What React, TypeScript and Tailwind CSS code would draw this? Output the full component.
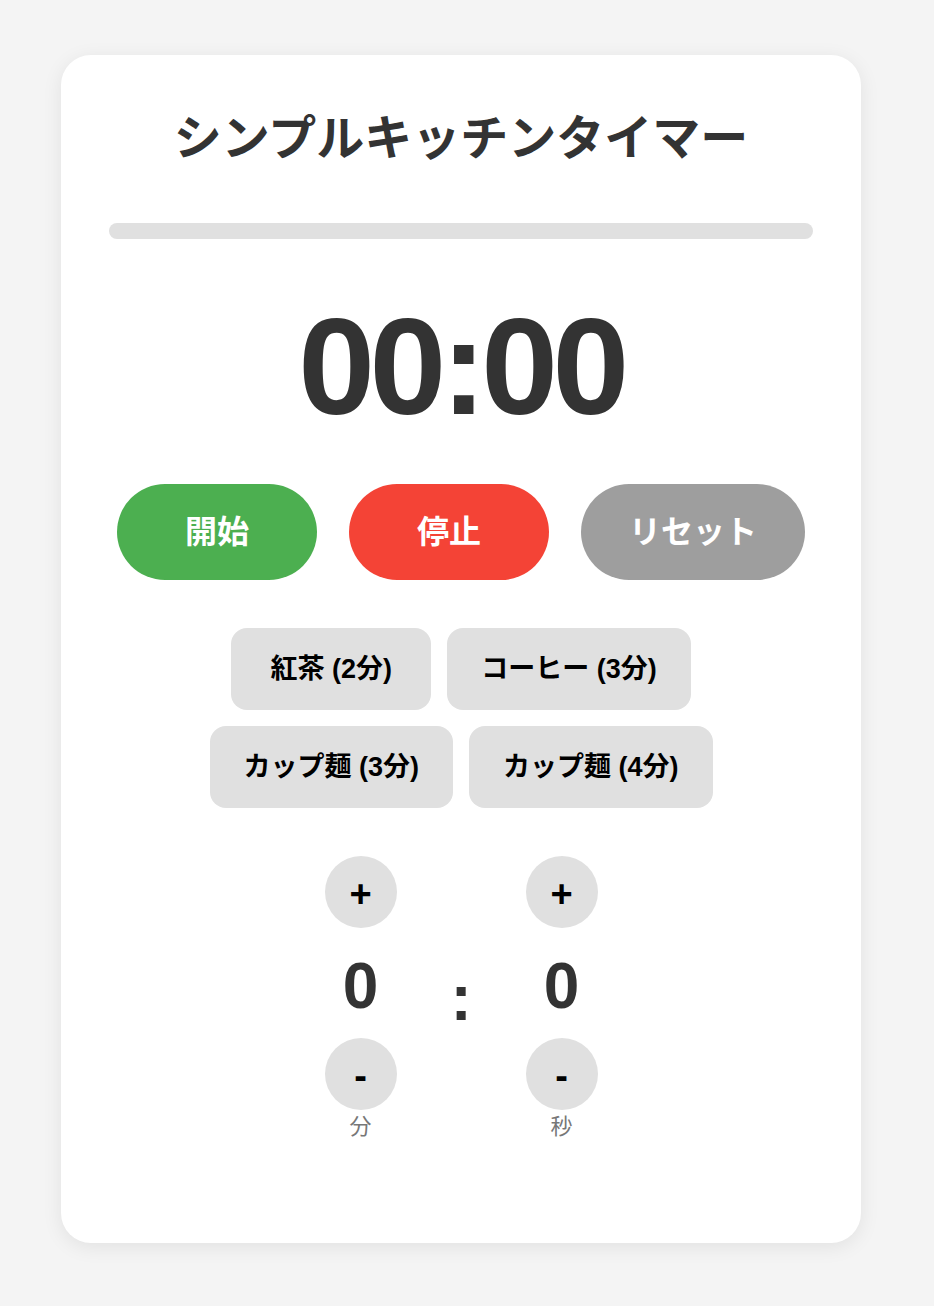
import { useEffect, useState } from "react";

const presets = [
  { label: "紅茶 (2分)", seconds: 120 },
  { label: "コーヒー (3分)", seconds: 180 },
  { label: "カップ麺 (3分)", seconds: 180 },
  { label: "カップ麺 (4分)", seconds: 240 },
];

const pad = (n: number) => String(n).padStart(2, "0");

function Adjuster({
  value,
  label,
  onUp,
  onDown,
}: {
  value: number;
  label: string;
  onUp: () => void;
  onDown: () => void;
}) {
  const btn =
    "flex h-[72px] w-[72px] items-center justify-center rounded-full bg-[#e0e0e0] pt-1 text-[38px] font-bold leading-none text-black";
  return (
    <div className="flex w-[100px] flex-col items-center">
      <button type="button" className={btn} onClick={onUp}>
        +
      </button>
      <div className="mt-[21px] mb-[15px] text-[64px] font-bold leading-[74px] text-[#333]">{value}</div>
      <button type="button" className={btn} onClick={onDown}>
        -
      </button>
      <div className="mt-[4px] text-[22px] leading-[26px] text-[#777]">{label}</div>
    </div>
  );
}

export default function App() {
  const [min, setMin] = useState(0);
  const [sec, setSec] = useState(0);
  const [total, setTotal] = useState(0);
  const [left, setLeft] = useState(0);
  const [running, setRunning] = useState(false);

  useEffect(() => {
    if (!running) return;
    const id = setInterval(() => {
      setLeft((l) => {
        if (l <= 1) {
          setRunning(false);
          return 0;
        }
        return l - 1;
      });
    }, 1000);
    return () => clearInterval(id);
  }, [running]);

  const setTime = (s: number) => {
    setRunning(false);
    setMin(Math.floor(s / 60));
    setSec(s % 60);
    setTotal(s);
    setLeft(s);
  };

  const start = () => {
    if (left > 0) setRunning(true);
  };

  const pct = total > 0 ? ((total - left) / total) * 100 : 0;
  const mainBtn =
    "min-w-[200px] rounded-full px-12 py-6 text-[32px] font-bold leading-[48px] text-white";

  return (
    <div
      className="flex min-h-screen items-start justify-center bg-[#f4f4f4] pr-3 pt-[55px] pb-[55px]"
      style={{ fontFamily: '"Liberation Sans", "Noto Sans CJK JP", sans-serif' }}
    >
      <div className="flex w-[800px] flex-col items-center rounded-[30px] bg-white px-12 pb-[103px] pt-12 shadow-[0_4px_20px_rgba(0,0,0,0.08)]">
        <h1 className="text-[48px] font-bold leading-[72px] text-[#333]">シンプルキッチンタイマー</h1>

        <div className="mt-12 h-4 w-full overflow-hidden rounded-full bg-[#e0e0e0]">
          <div className="h-full bg-[#4caf50]" style={{ width: `${pct}%` }} />
        </div>

        <div className="mt-[58px] mb-[49px] text-[138px] font-bold leading-none tracking-[-0.04em] text-[#333]">
          {pad(Math.floor(left / 60))}:{pad(left % 60)}
        </div>

        <div className="flex justify-center gap-8">
          <button type="button" className={`${mainBtn} bg-[#4caf50]`} onClick={start}>
            開始
          </button>
          <button type="button" className={`${mainBtn} bg-[#f44336]`} onClick={() => setRunning(false)}>
            停止
          </button>
          <button type="button" className={`${mainBtn} bg-[#9e9e9e]`} onClick={() => setTime(0)}>
            リセット
          </button>
        </div>

        <div className="mt-12 flex max-w-[560px] flex-wrap justify-center gap-4">
          {presets.map((p) => (
            <button
              key={p.label}
              type="button"
              className="min-w-[200px] rounded-2xl bg-[#e0e0e0] px-[34px] py-6 text-[27px] font-bold leading-[34px] text-black"
              onClick={() => setTime(p.seconds)}
            >
              {p.label}
            </button>
          ))}
        </div>

        <div className="mt-12 flex items-center justify-center gap-10">
          <Adjuster
            value={min}
            label="分"
            onUp={() => setTime((min + 1) * 60 + sec)}
            onDown={() => setTime(Math.max(0, min - 1) * 60 + sec)}
          />
          <div className="w-[21px] text-center text-[64px] font-bold leading-[74px] text-[#333]">:</div>
          <Adjuster
            value={sec}
            label="秒"
            onUp={() => setTime(min * 60 + Math.min(59, sec + 1))}
            onDown={() => setTime(min * 60 + Math.max(0, sec - 1))}
          />
        </div>
      </div>
    </div>
  );
}
